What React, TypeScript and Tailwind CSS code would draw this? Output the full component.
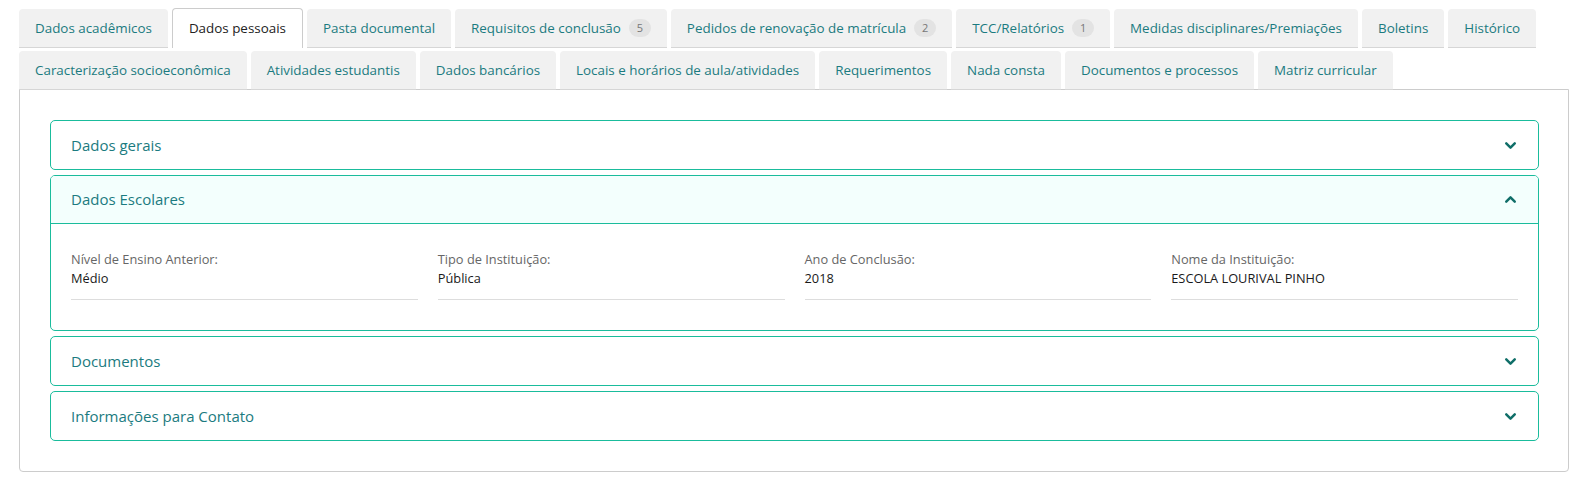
import { ChevronDown, ChevronUp } from 'lucide-react';

type Tab = { label: string; badge?: number; active?: boolean };

const row1: Tab[] = [
  { label: 'Dados acadêmicos' },
  { label: 'Dados pessoais', active: true },
  { label: 'Pasta documental' },
  { label: 'Requisitos de conclusão', badge: 5 },
  { label: 'Pedidos de renovação de matrícula', badge: 2 },
  { label: 'TCC/Relatórios', badge: 1 },
  { label: 'Medidas disciplinares/Premiações' },
  { label: 'Boletins' },
  { label: 'Histórico' },
];

const row2: Tab[] = [
  { label: 'Caracterização socioeconômica' },
  { label: 'Atividades estudantis' },
  { label: 'Dados bancários' },
  { label: 'Locais e horários de aula/atividades' },
  { label: 'Requerimentos' },
  { label: 'Nada consta' },
  { label: 'Documentos e processos' },
  { label: 'Matriz curricular' },
];

const fields = [
  { label: 'Nível de Ensino Anterior:', value: 'Médio' },
  { label: 'Tipo de Instituição:', value: 'Pública' },
  { label: 'Ano de Conclusão:', value: '2018' },
  { label: 'Nome da Instituição:', value: 'ESCOLA LOURIVAL PINHO' },
];

function TabItem({ tab }: { tab: Tab }) {
  return (
    <div
      className={`px-4 flex items-center gap-2 rounded-t-[4px] text-[13.4px] whitespace-nowrap ${
        tab.active
          ? 'bg-white border border-b-0 border-[#cccccc] text-[#222] relative z-10 h-[40px]'
          : 'h-[39px] bg-[#f1f1f1] text-[#1b7b80] border-b border-[#d6d6d6]'
      }`}
    >
      {tab.label}
      {tab.badge !== undefined && (
        <span className="min-w-[22px] h-[18px] px-1.5 rounded-full bg-[#e3e3e3] text-[#777] text-[11px] flex items-center justify-center">
          {tab.badge}
        </span>
      )}
    </div>
  );
}

function AccordionHeader({ title, open }: { title: string; open?: boolean }) {
  return (
    <div
      className={`h-[48px] pl-5 pr-[19px] flex items-center justify-between text-[15px] text-[#1b7b80] ${
        open ? 'bg-[#f3fffd] border-b border-[#1abc9c]' : ''
      }`}
    >
      <span>{title}</span>
      {open ? (
        <ChevronUp className="h-[17px] w-[17px] text-[#0f6e68]" strokeWidth={3.5} />
      ) : (
        <ChevronDown className="h-[17px] w-[17px] text-[#0f6e68]" strokeWidth={3.5} />
      )}
    </div>
  );
}

export default function App() {
  return (
    <div
      className="bg-white w-full pl-[19px] pr-[14px] pt-2"
      style={{ fontFamily: '"Open Sans", "Noto Sans", sans-serif' }}
    >
      {/* Tabs */}
      <div className="flex items-end gap-1">
        {row1.map((t) => (
          <TabItem key={t.label} tab={t} />
        ))}
      </div>
      <div className="flex items-end gap-1 mt-[3px]">
        {row2.map((t) => (
          <TabItem key={t.label} tab={t} />
        ))}
      </div>

      {/* Panel */}
      <div className="border border-[#cccccc] rounded-b-[4px] -mt-px pt-[30px] pb-[30px] pl-[30px] pr-[29px] flex flex-col gap-[5px]">
        <div className="border border-[#1abc9c] rounded-[5px]">
          <AccordionHeader title="Dados gerais" />
        </div>

        <div className="border border-[#1abc9c] rounded-[5px] overflow-hidden">
          <AccordionHeader title="Dados Escolares" open />
          <div className="px-5 pt-[26px] pb-[30px] grid grid-cols-4 gap-5">
            {fields.map((f) => (
              <div key={f.label} className="border-b border-[#dddddd] pb-[11px]">
                <p className="text-[12.8px] text-[#666] leading-[19px]">{f.label}</p>
                <p className="text-[12.8px] text-[#1a1a1a] leading-[19px]">{f.value}</p>
              </div>
            ))}
          </div>
        </div>

        <div className="border border-[#1abc9c] rounded-[5px]">
          <AccordionHeader title="Documentos" />
        </div>

        <div className="border border-[#1abc9c] rounded-[5px]">
          <AccordionHeader title="Informações para Contato" />
        </div>
      </div>
    </div>
  );
}
